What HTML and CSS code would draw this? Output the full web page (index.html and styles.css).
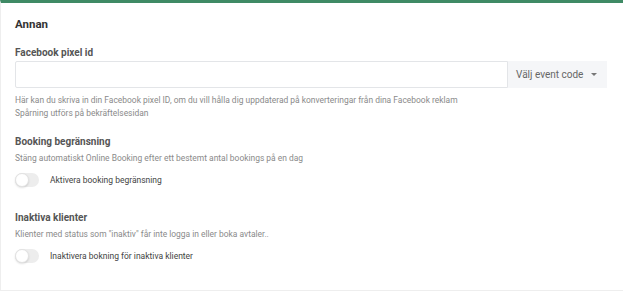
FILE: index.html
```html
<html>
  <head>
    <meta name="viewport" content="width=device-width,initial-scale=1">
    <title>Annan</title>
    <link rel="stylesheet" href="styles.css">
  </head>
  <body>
    <main class="panel">
      <h2 class="panel-title">Annan</h2>

      <section class="field">
        <h3 class="field-label">Facebook pixel id</h3>
        <div class="input-group">
          <input type="text" class="text-input">
          <div class="select-addon">
            <span>Välj event code</span>
            <span class="caret"></span>
          </div>
        </div>
        <p class="help">Här kan du skriva in din Facebook pixel ID, om du vill hålla dig uppdaterad på konverteringar från dina Facebook reklam<br>Spårning utförs på bekräftelsesidan</p>
      </section>

      <section class="field">
        <h3 class="field-label">Booking begränsning</h3>
        <p class="help">Stäng automatiskt Online Booking efter ett bestemt antal bookings på en dag</p>
        <label class="toggle-row">
          <span class="toggle"><span class="knob"></span></span>
          <span class="toggle-text">Aktivera booking begränsning</span>
        </label>
      </section>

      <section class="field">
        <h3 class="field-label">Inaktiva klienter</h3>
        <p class="help">Klienter med status som "inaktiv" får inte logga in eller boka avtaler..</p>
        <label class="toggle-row">
          <span class="toggle"><span class="knob"></span></span>
          <span class="toggle-text">Inaktivera bokning för inaktiva klienter</span>
        </label>
      </section>
    </main>
  </body>
</html>
```

FILE: styles.css
```css
:root {
    --green: #3f8a65;
    --heading: #333;
    --label: #555;
    --muted: #8a8a8a;
    --border: #e3e5e8;
    --addon: #f5f6f8;
}

html, body {
    margin: 0;
    padding: 0;
    background: #fff;
}

body {
    font-family: Roboto, "Liberation Sans", sans-serif;
    color: var(--heading);
}

.panel {
    border-top: 3px solid var(--green);
    border-left: 1px solid #eee;
    border-bottom: 1px solid #eee;
    padding: 14px 16px 22px 14px;
    height: 291px;
    box-sizing: border-box;
}

.panel-title {
    margin: 0 0 16px;
    font-size: 11.5px;
    font-weight: 700;
    color: var(--heading);
}

.field {
    margin-bottom: 16px;
}

.field-label {
    margin: 0 0 3px;
    font-size: 10px;
    font-weight: 700;
    color: var(--label);
}

.input-group {
    display: flex;
    height: 27px;
}

.text-input {
    flex: 1;
    border: 1px solid var(--border);
    border-radius: 2px 0 0 2px;
    margin: 0;
    padding: 0 8px;
    outline: none;
}

.select-addon {
    width: 99px;
    box-sizing: border-box;
    background: var(--addon);
    display: flex;
    align-items: center;
    justify-content: space-between;
    padding: 0 10px 0 8px;
    font-size: 10px;
    color: #666;
}

.caret {
    width: 0;
    height: 0;
    border-left: 3px solid transparent;
    border-right: 3px solid transparent;
    border-top: 3px solid #777;
}

.help {
    margin: 6px 0 0;
    font-size: 8.45px;
    line-height: 13px;
    color: var(--muted);
}

.field-label + .help {
    margin-top: 5px;
}

.toggle-row {
    display: flex;
    align-items: center;
    margin: 8px 0 25px;
}

.toggle {
    width: 24px;
    height: 14px;
    border-radius: 7px;
    background: #ededed;
    position: relative;
    margin-right: 11px;
}

.knob {
    position: absolute;
    left: 0;
    top: 0;
    width: 14px;
    height: 14px;
    box-sizing: border-box;
    border-radius: 50%;
    background: #fff;
    border: 1px solid #e2e2e2;
    box-shadow: 0 1px 2px rgba(0, 0, 0, 0.12);
}

.toggle-text {
    font-size: 8.5px;
    color: #444;
}
```
